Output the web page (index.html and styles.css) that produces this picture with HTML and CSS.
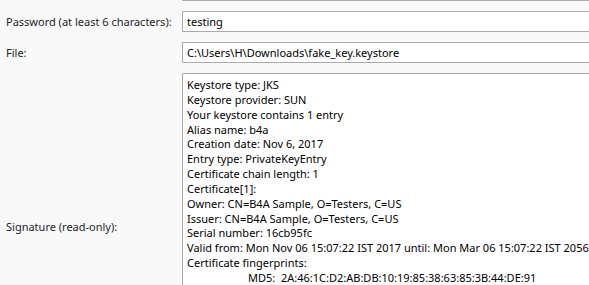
FILE: index.html
```html
<!DOCTYPE html>
<html>
<head>
<meta charset="utf-8">
<link rel="stylesheet" href="styles.css">
</head>
<body>
<div class="form">
  <div class="row row-top">
    <div class="label"></div>
    <div class="field"></div>
  </div>
  <div class="row">
    <div class="label">Password (at least 6 characters):</div>
    <div class="field">testing</div>
  </div>
  <div class="row">
    <div class="label">File:</div>
    <div class="field">C:\Users\H\Downloads\fake_key.keystore</div>
  </div>
  <div class="row row-area">
    <div class="label">Signature (read-only):</div>
    <div class="area">Keystore type: JKS
Keystore provider: SUN
Your keystore contains 1 entry
Alias name: b4a
Creation date: Nov 6, 2017
Entry type: PrivateKeyEntry
Certificate chain length: 1
Certificate[1]:
Owner: CN=B4A Sample, O=Testers, C=US
Issuer: CN=B4A Sample, O=Testers, C=US
Serial number: 16cb95fc
Valid from: Mon Nov 06 15:07:22 IST 2017 until: Mon Mar 06 15:07:22 IST 2056
Certificate fingerprints:
<span class="indent">MD5:  2A:46:1C:D2:AB:DB:10:19:85:38:63:85:3B:44:DE:91</span></div>
  </div>
</div>
</body>
</html>
```
FILE: styles.css
```css
html, body {
  margin: 0;
  padding: 0;
  background: #f9f9f9;
  overflow: hidden;
  height: 285px;
}
body {
  font-family: "Noto Sans", "Open Sans", sans-serif;
  font-size: 11px;
  color: #1a1a1a;
}
.form {
  display: flex;
  flex-direction: column;
  gap: 10px;
  margin-top: -20px;
  width: 800px;
}
.row {
  display: grid;
  grid-template-columns: 182px 1fr;
  align-items: center;
}
.label {
  padding-left: 6px;
  white-space: nowrap;
  color: #1e1e2a;
}
.field {
  height: 19px;
  border: 1px solid #ababab;
  background: #ffffff;
  line-height: 19px;
  padding-left: 4px;
  color: #000;
  white-space: nowrap;
}
.area {
  height: 298px;
  border: 1px solid #ababab;
  background: #ffffff;
  padding: 4px 4px 2px;
  line-height: 14.85px;
  white-space: pre;
  color: #000;
}
.indent {
  padding-left: 61px;
}
```
